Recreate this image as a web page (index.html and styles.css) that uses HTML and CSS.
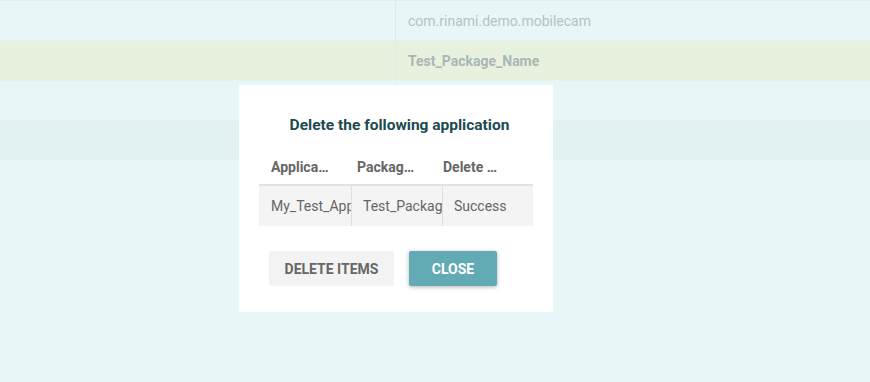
FILE: index.html
```html
<!DOCTYPE html>
<html>
<head>
<meta charset="utf-8">
<link rel="stylesheet" href="styles.css">
</head>
<body>
<div class="page">
  <div class="grid">
    <div class="row">
      <div class="cell first"></div>
      <div class="cell second">com.rinami.demo.mobilecam</div>
    </div>
    <div class="row green">
      <div class="cell first"></div>
      <div class="cell second bold">Test_Package_Name</div>
    </div>
    <div class="row">
      <div class="cell first"></div>
      <div class="cell second"></div>
    </div>
    <div class="row dark">
      <div class="cell first"></div>
      <div class="cell second"></div>
    </div>
  </div>

  <div class="modal">
    <h2 class="title">Delete the following application</h2>
    <div class="table">
      <div class="thead">
        <div class="th">Applica…</div>
        <div class="th">Packag…</div>
        <div class="th">Delete …</div>
      </div>
      <div class="tbody">
        <div class="td">My_Test_App</div>
        <div class="td">Test_Package_Name</div>
        <div class="td">Success</div>
      </div>
    </div>
    <div class="actions">
      <button class="btn btn-flat">DELETE ITEMS</button>
      <button class="btn btn-raised">CLOSE</button>
    </div>
  </div>
</div>
</body>
</html>
```

FILE: styles.css
```css
* { box-sizing: border-box; }
html, body {
  margin: 0;
  padding: 0;
  width: 870px;
  height: 382px;
  overflow: hidden;
  background: #e8f6f7;
  font-family: Roboto, "Liberation Sans", sans-serif;
}
.page {
  position: relative;
  width: 870px;
  height: 382px;
}
.grid {
  display: flex;
  flex-direction: column;
}
.row {
  display: flex;
  height: 40px;
  border-top: 1px solid #e3f2f3;
  background: #e8f6f7;
}
.row:first-child { border-top-color: #dfeff0; }
.row.green { background: #e8f1de; }
.row.dark { background: #e2f2f3; }
.cell {
  height: 100%;
  font-size: 14px;
  color: #b4c3c5;
  display: flex;
  align-items: center;
}
.cell.first {
  width: 396px;
  border-right: 1px solid #dcecee;
}
.cell.second {
  padding-left: 12px;
  flex: 1;
}
.cell.bold {
  font-weight: 700;
  color: #abb6b6;
  padding-top: 1px;
}
.modal {
  position: absolute;
  left: 239px;
  top: 85px;
  width: 314px;
  height: 227px;
  background: #ffffff;
  padding: 30px 20px 0 20px;
}
.title {
  margin: 0;
  padding-left: 7px;
  text-align: center;
  font-size: 15.5px;
  font-weight: 700;
  color: #1b4a50;
  line-height: 20px;
}
.table {
  margin-top: 20px;
  width: 274px;
}
.thead {
  display: grid;
  grid-template-columns: 86px 86px 86px;
  height: 31px;
  border-bottom: 2px solid #e2e2e2;
}
.tbody {
  display: grid;
  grid-template-columns: 92px 91px 91px;
  background: #f4f4f4;
  height: 40px;
}
.th {
  font-size: 14px;
  font-weight: 700;
  color: #666666;
  padding: 4px 0 0 12px;
  white-space: nowrap;
  overflow: hidden;
}
.td {
  font-size: 14px;
  color: #666666;
  white-space: nowrap;
  overflow: hidden;
  display: flex;
  align-items: center;
  padding-left: 11px;
  border-left: 1px solid #e0e0e0;
}
.td:first-child { border-left: none; padding-left: 12px; }
.actions {
  display: flex;
  gap: 15px;
  margin-top: 25px;
  padding-left: 10px;
}
.btn {
  height: 35px;
  border: none;
  border-radius: 2px;
  font-family: Roboto, "Liberation Sans", sans-serif;
  font-size: 14px;
  font-weight: 700;
  padding: 0;
  cursor: pointer;
}
.btn-flat {
  width: 125px;
  background: #f3f3f3;
  color: #666666;
}
.btn-raised {
  width: 88px;
  background: #62abb4;
  color: #ffffff;
  box-shadow: 0 1px 4px rgba(0,0,0,0.3);
}
```
